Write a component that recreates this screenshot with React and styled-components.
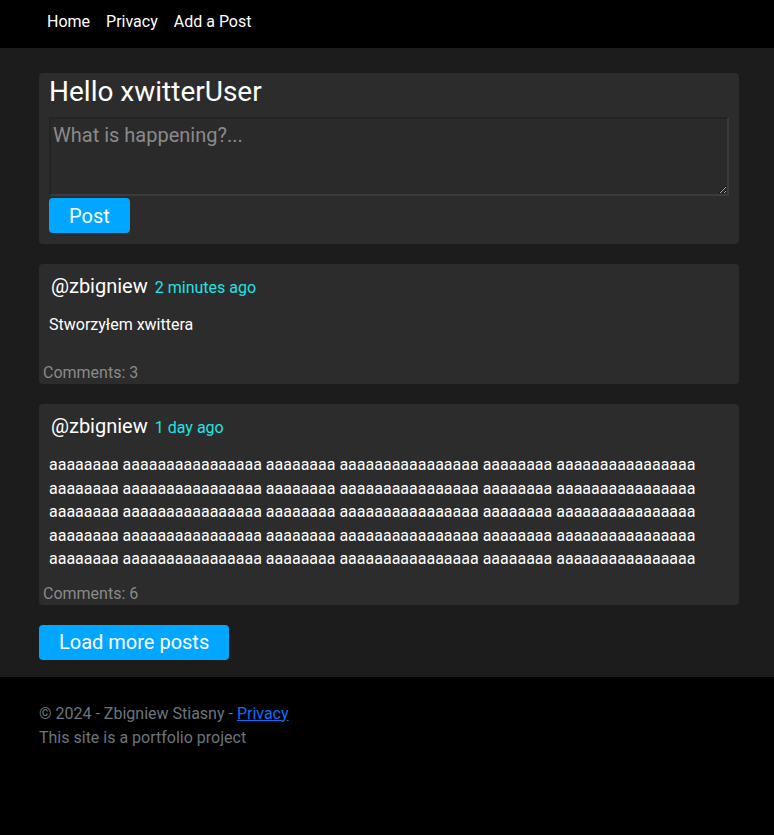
import React from 'react'
import styled, { createGlobalStyle } from 'styled-components';

const posts = [
    { id: 1, user: 'zbigniew', time: '2 minutes ago', text: 'Stworzyłem xwittera', comments: 3 },
    {
        id: 2,
        user: 'zbigniew',
        time: '1 day ago',
        text: Array(15).fill('aaaaaaaa aaaaaaaaaaaaaaaa').join(' '),
        comments: 6,
    },
];

const getPosts = (data) => {
    return data.map((post) =>
        <Post key={post.id}>
            <PostHeader>
                <Username>@{post.user}</Username>
                <Time>{post.time}</Time>
            </PostHeader>
            <PostBody>{post.text}</PostBody>
            <Comments>Comments: {post.comments}</Comments>
        </Post>
    );
}

const App = () => (
    <>
        <GlobalStyle />
        <Header>
            <NavLink href="#">Home</NavLink>
            <NavLink href="#">Privacy</NavLink>
            <NavLink href="#">Add a Post</NavLink>
        </Header>
        <Main>
            <Card>
                <Greeting>Hello xwitterUser</Greeting>
                <TextArea placeholder="What is happening?..." />
                <Button>Post</Button>
            </Card>
            {getPosts(posts)}
            <Button>Load more posts</Button>
        </Main>
        <Footer>
            <div>© 2024 - Zbigniew Stiasny - <FooterLink href="#">Privacy</FooterLink></div>
            <div>This site is a portfolio project</div>
        </Footer>
    </>
)

export default App;

/*
    Styles
*/
const GlobalStyle = createGlobalStyle`
    html, body {
        margin: 0;
        background: #000;
        font-family: Roboto, "Liberation Sans", sans-serif;
        color: #fff;
    }
`;

const Header = styled.nav`
    display: flex;
    align-items: flex-start;
    height: 48px;
    padding: 11px 39px 0;
    box-sizing: border-box;
    background: #000;
`;

const NavLink = styled.a`
    padding: 0 8px;
    font-size: 16px;
    line-height: 22px;
    color: #fff;
    text-decoration: none;
`;

const Main = styled.main`
    display: flex;
    flex-direction: column;
    align-items: flex-start;
    gap: 20px;
    padding: 25px 35px 17px 39px;
    background: #1c1c1c;
`;

const Card = styled.section`
    display: flex;
    flex-direction: column;
    align-items: flex-start;
    align-self: stretch;
    padding: 2px 10px 11px;
    background: #2c2c2c;
    border-radius: 4px;
`;

const Greeting = styled.h1`
    margin: 0 0 8px;
    font-size: 28px;
    font-weight: 400;
    line-height: 34px;
`;

const TextArea = styled.textarea`
    align-self: stretch;
    box-sizing: border-box;
    height: 79px;
    margin: 0 0 2px;
    padding: 4px 2px;
    font-family: Roboto, "Liberation Sans", sans-serif;
    font-size: 20px;
    color: #fff;
    background: #2a2a2a;
    border: 2px solid;
    border-color: #242424 #3b3b3b #3b3b3b #242424;
    outline: none;

    &::placeholder {
        color: #8a8a8a;
    }
`;

const Button = styled.button`
    height: 35px;
    padding: 0 20px;
    font-family: Roboto, "Liberation Sans", sans-serif;
    font-size: 20px;
    color: #fff;
    background: #00a6ff;
    border: none;
    border-radius: 4px;
    cursor: pointer;
`;

const Post = styled.article`
    display: flex;
    flex-direction: column;
    align-self: stretch;
    box-sizing: border-box;
    min-height: 120px;
    padding: 10px 10px 1px;
    background: #2c2c2c;
    border-radius: 4px;
`;

const PostHeader = styled.div`
    display: flex;
    align-items: baseline;
    gap: 7px;
    padding-left: 2px;
    line-height: 24px;
`;

const Username = styled.span`
    font-size: 20px;
`;

const Time = styled.span`
    font-size: 16px;
    color: #1fe3e6;
`;

const PostBody = styled.p`
    margin: 13px 0 0;
    font-size: 16px;
    line-height: 23.5px;
`;

const Comments = styled.div`
    margin: auto 0 0 -6px;
    padding-top: 13px;
    font-size: 16px;
    line-height: 20px;
    color: #8a8a8a;
`;

const Footer = styled.footer`
    padding: 25px 39px;
    font-size: 16px;
    line-height: 24px;
    color: #6c757d;
`;

const FooterLink = styled.a`
    color: #0d6efd;
    text-decoration: underline;
`;
